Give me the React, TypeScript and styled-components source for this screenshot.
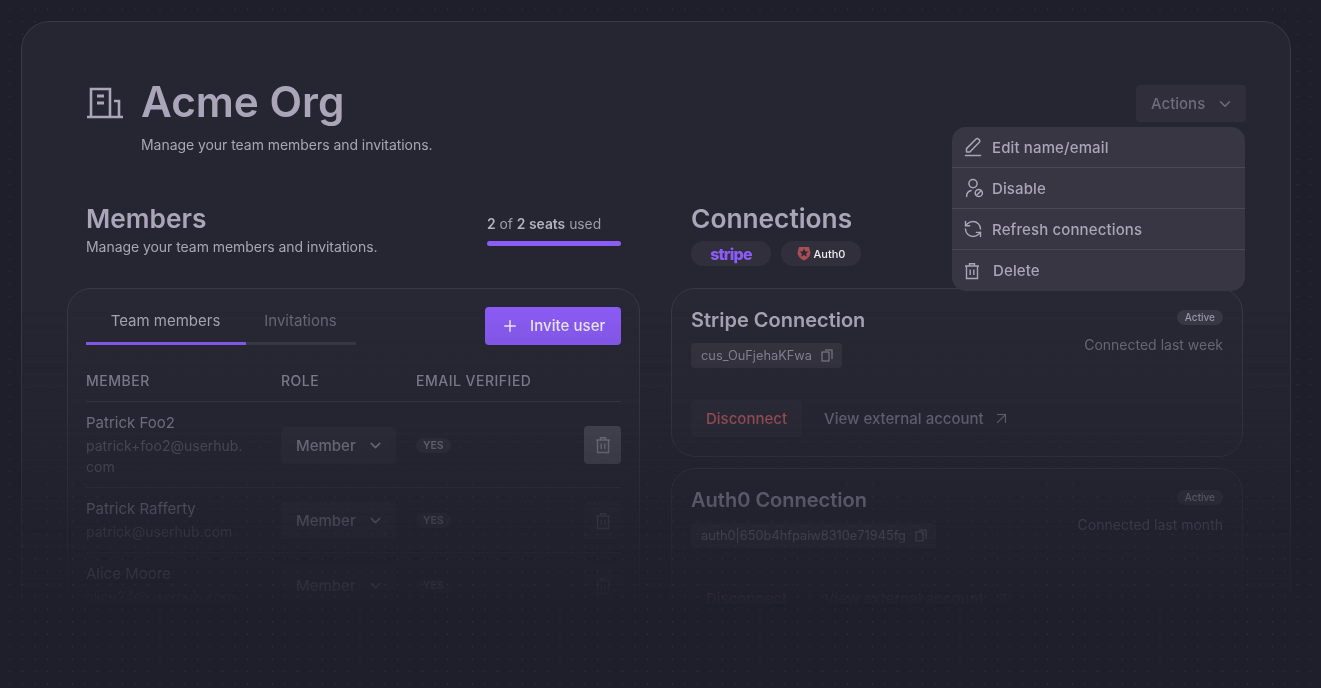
import React from 'react';
import styled, { createGlobalStyle } from 'styled-components';
import { ArrowUpRight, ChevronDown, Plus, RefreshCcw } from 'lucide-react';

const GlobalStyle = createGlobalStyle`
  html, body {
    margin: 0;
    height: 688px;
    overflow: hidden;
    background: #1f1f2c;
    font-family: Inter, "Liberation Sans", sans-serif;
    -webkit-font-smoothing: antialiased;
  }
  * { box-sizing: border-box; }
`;

const Page = styled.div`
  height: 688px;
  padding: 21px 30px 0 21px;
  background-color: #1f1f2c;
  background-image: radial-gradient(circle, #383844 0.5px, transparent 0.9px);
  background-size: 12.5px 12.5px;
  background-position: 3.75px 3px;
`;

const Window = styled.div`
  height: 586px;
  padding: 0 47px 0 45px;
  overflow: hidden;
  background: #262632;
  border: 1px solid #3a3a46;
  border-bottom: 0;
  border-radius: 28px 28px 0 0;
  -webkit-mask-image: linear-gradient(to bottom, #000 0, #000 285px, rgba(0, 0, 0, 0.72) 400px, rgba(0, 0, 0, 0.3) 510px, rgba(0, 0, 0, 0.1) 572px, rgba(0, 0, 0, 0) 586px);
  mask-image: linear-gradient(to bottom, #000 0, #000 285px, rgba(0, 0, 0, 0.72) 400px, rgba(0, 0, 0, 0.3) 510px, rgba(0, 0, 0, 0.1) 572px, rgba(0, 0, 0, 0) 586px);
`;

const Header = styled.header`
  display: flex;
  justify-content: space-between;
  align-items: flex-start;
  padding: 55px 0 0 19px;
  margin-right: -3px;
`;

const TitleBlock = styled.div`
  display: grid;
  grid-template-columns: 55px auto;
  row-gap: 8px;
  align-items: center;
`;

const Title = styled.h1`
  margin: 0;
  font-size: 42.3px;
  line-height: 50px;
  font-weight: 600;
  color: #aba5b9;
`;

const HeaderSub = styled.p`
  grid-column: 2;
  margin: 0;
  font-size: 14px;
  line-height: 20px;
  letter-spacing: -0.05px;
  color: #a9a5b4;
`;

const ActionsWrap = styled.div`
  position: relative;
  margin-top: 8px;
`;

const ActionsButton = styled.button`
  display: flex;
  align-items: center;
  justify-content: space-between;
  width: 110px;
  height: 37px;
  padding: 0 12px 0 15px;
  border: 0;
  border-radius: 4px;
  background: #2f2e3a;
  color: #6f6b7d;
  font: 500 15px/20px Inter, sans-serif;
`;

const Menu = styled.div`
  position: absolute;
  top: 42px;
  right: 1px;
  z-index: 2;
  width: 293px;
  border-radius: 14px;
  background: #383643;
  overflow: hidden;
`;

const MenuItem = styled.div<{ $gap?: number }>`
  display: flex;
  align-items: center;
  gap: ${(p) => p.$gap ?? 9}px;
  height: 41px;
  padding: 0 0 0 11px;
  border-bottom: 1px solid #4a4855;
  color: #aaa5b8;
  font-size: 15px;
  font-weight: 500;
  letter-spacing: 0.13px;
  &:last-child {
    border-bottom: 0;
  }
`;

const Columns = styled.div`
  display: grid;
  grid-template-columns: 573px 572px;
  column-gap: 31px;
  margin-top: 48px;
`;

const SectionHead = styled.div<{ $inset: number }>`
  display: flex;
  justify-content: space-between;
  height: 85px;
  padding: 0 19px 0 ${(p) => p.$inset}px;
`;

const SectionTitle = styled.h2`
  margin: 0;
  font-size: 26.3px;
  line-height: 32px;
  font-weight: 600;
  color: #aaa5b8;
`;

const SectionSub = styled.p`
  margin: 2px 0 0;
  font-size: 14px;
  line-height: 20px;
  letter-spacing: -0.05px;
  color: #a9a5b4;
`;

const Seats = styled.div`
  width: 134px;
  padding-top: 11px;
  font-size: 13.85px;
  line-height: 20px;
  color: #a09cab;
  b {
    font-weight: 600;
    color: #b4b0bf;
  }
`;

const SeatBar = styled.div`
  height: 5px;
  margin-top: 7px;
  border-radius: 3px;
  background: #8b5cf6;
`;

const Card = styled.section`
  padding: 18px 18px 0;
  background: rgba(255, 255, 255, 0.012);
  border: 1px solid #393845;
  border-radius: 24px;
`;

const CardTop = styled.div`
  display: flex;
  justify-content: space-between;
  align-items: flex-end;
`;

const Tabs = styled.div`
  display: grid;
  grid-template-columns: 160px 110px;
`;

const Tab = styled.div<{ $active?: boolean }>`
  height: 35px;
  padding: 1px 1px 0 0;
  text-align: center;
  font-size: 15px;
  line-height: 20px;
  color: ${(p) => (p.$active ? '#a9a5b5' : '#6a6777')};
  border-bottom: 3px solid ${(p) => (p.$active ? '#8b5cf6' : '#393845')};
`;

const InviteButton = styled.button`
  display: flex;
  align-items: center;
  gap: 11px;
  width: 136px;
  height: 38px;
  padding: 0 0 0 16px;
  border: 0;
  border-radius: 4px;
  background: #8b5cf6;
  color: #f1ecfb;
  font: 500 15px/20px Inter, sans-serif;
  letter-spacing: 0.06px;
`;

const TableRow = styled.div<{ $head?: boolean }>`
  display: grid;
  grid-template-columns: 195px 135px 1fr 37px;
  align-items: center;
  padding: ${(p) => (p.$head ? '26px 0 10px' : '11px 0 10px')};
  border-bottom: 1px solid #383743;
`;

const HeadCell = styled.div`
  font-size: 14px;
  line-height: 20px;
  font-weight: 500;
  letter-spacing: 0.5px;
  color: #8f8b9c;
`;

const Name = styled.div`
  font-size: 15px;
  line-height: 20px;
  color: #8f8b9c;
`;

const Email = styled.div`
  width: 160px;
  margin-top: 2px;
  font-size: 14px;
  line-height: 21px;
  color: #5f5c6b;
  overflow-wrap: anywhere;
`;

const RoleSelect = styled.div`
  display: flex;
  align-items: center;
  justify-content: space-between;
  width: 115px;
  height: 37px;
  padding: 0 12px 0 15px;
  border-radius: 4px;
  background: #2f2e3a;
  color: #928e9f;
  font-size: 15px;
  font-weight: 500;
`;

const YesCell = styled.div`
  display: flex;
  align-items: center;
`;

const YesPill = styled.span`
  padding: 0 7px;
  border-radius: 8px;
  background: #33323e;
  color: #85818f;
  font-size: 10.5px;
  line-height: 15px;
  font-weight: 600;
`;

const TrashButton = styled.div<{ $active?: boolean }>`
  display: flex;
  align-items: center;
  justify-content: center;
  width: 37px;
  height: 38px;
  border-radius: 4px;
  background: ${(p) => (p.$active ? '#4e4d59' : '#2c2b37')};
  color: ${(p) => (p.$active ? '#8f8b9c' : '#55525f')};
`;

const LogoRow = styled.div`
  display: flex;
  gap: 10px;
  margin-top: 6px;
`;

const LogoPill = styled.div`
  display: flex;
  align-items: center;
  justify-content: center;
  gap: 3px;
  width: 80px;
  height: 25px;
  border-radius: 12px;
  background: #302f3b;
`;

const StripeMark = styled.span`
  color: #8b5cf6;
  font-size: 16px;
  font-weight: 800;
  letter-spacing: -0.8px;
`;

const AuthMark = styled.span`
  color: #eeedf2;
  font-size: 11px;
  font-weight: 500;
`;

const ConnectionStack = styled.div`
  display: flex;
  flex-direction: column;
  gap: 11px;
`;

const ConnectionCard = styled.section`
  display: flex;
  justify-content: space-between;
  height: 169px;
  padding: 19px 19px 0;
  background: rgba(255, 255, 255, 0.012);
  border: 1px solid #393845;
  border-radius: 24px;
`;

const ConnectionTitle = styled.h3`
  margin: 0;
  font-size: 20px;
  line-height: 24px;
  font-weight: 600;
  color: #aaa5b8;
`;

const IdChip = styled.div`
  display: inline-flex;
  align-items: center;
  gap: 9px;
  height: 25px;
  margin-top: 11px;
  padding: 0 9px 0 10px;
  border-radius: 4px;
  background: #35343f;
  color: #8f8b9c;
  font-size: 12.8px;
`;

const ConnectionActions = styled.div`
  display: flex;
  align-items: center;
  gap: 22px;
  margin-top: 32px;
`;

const DisconnectButton = styled.div`
  display: flex;
  align-items: center;
  height: 37px;
  padding: 0 15px;
  border-radius: 4px;
  background: #2d2c38;
  color: #bb5b5f;
  font-size: 15px;
  font-weight: 500;
`;

const ExternalLink = styled.div`
  display: flex;
  align-items: center;
  gap: 8px;
  color: #777485;
  font-size: 15px;
  font-weight: 500;
`;

const ConnectionMeta = styled.div`
  display: flex;
  flex-direction: column;
  align-items: flex-end;
  padding-top: 2px;
`;

const ActivePill = styled.span`
  padding: 0 8px;
  border-radius: 8px;
  background: #393845;
  color: #9d99a8;
  font-size: 10px;
  line-height: 15px;
  font-weight: 500;
`;

const Connected = styled.div`
  margin-top: 10px;
  color: #6f6c7b;
  font-size: 14px;
  line-height: 20px;
`;

const line = {
  fill: 'none',
  stroke: 'currentColor',
  strokeLinecap: 'round' as const,
  strokeLinejoin: 'round' as const,
};

const BuildingIcon = () => (
  <svg width="38" height="33" viewBox="0 0 38 33" style={{ color: '#aba5b9', marginLeft: 1 }}>
    <g {...line} strokeWidth="2.6" strokeLinecap="butt" strokeLinejoin="miter">
      <path d="M0 31h36" />
      <path d="M4 31V3h19v28" />
      <path d="M10 10h7M10 17h7" strokeWidth="3.2" />
      <path d="M27 15h5v16" />
    </g>
  </svg>
);

const PencilIcon = () => (
  <svg width="20" height="20" viewBox="0 0 20 20" style={{ marginLeft: 1 }}>
    <g {...line} strokeWidth="1.5">
      <path d="M1.500 18.500h15" />
      <path d="M2.500 15v-3.400L12.100 2a1.600 1.600 0 0 1 2.300 0l.9.9a1.600 1.600 0 0 1 0 2.300L5.800 15z" />
    </g>
  </svg>
);

const UserOffIcon = () => (
  <svg width="20" height="20" viewBox="0 0 20 20" style={{ marginLeft: 1 }}>
    <g {...line} strokeWidth="1.5">
      <circle cx="9" cy="5.600" r="4.100" />
      <path d="M2.600 18.600c0-3.200 2-5.400 4.600-6" />
      <circle cx="14.800" cy="15" r="3.600" />
      <path d="M12.600 17.200l4.400-4.400" />
    </g>
  </svg>
);

const TrashIcon = ({ size = 18 }: { size?: number }) => (
  <svg width={size} height={size} viewBox="0 0 18 18">
    <g {...line} strokeWidth="1.4" strokeLinecap="butt" strokeLinejoin="miter">
      <path d="M2 4h14" />
      <path d="M6.500 4V1.700h5V4" />
      <path d="M3.500 4v12.500h11V4" />
      <path d="M7.200 7.500v5.500M10.800 7.500v5.500" />
    </g>
  </svg>
);

const CopyIcon = () => (
  <svg width="12" height="13" viewBox="0 0 12 13">
    <g {...line} strokeWidth="1.1" strokeLinecap="butt" strokeLinejoin="miter">
      <rect x="1" y="3" width="7" height="9" />
      <path d="M4 1h7v9" />
    </g>
  </svg>
);

const ShieldIcon = () => (
  <svg width="14" height="15" viewBox="0 0 14 15">
    <path d="M2 1h10l1.400 5.400c.3 3.400-2.500 6.400-6.400 8.200C3.100 12.800.3 9.800.6 6.400z" fill="#a84f53" />
    <path d="M7 2.600l1.400 3h3.100L9 7.700l1 3.100L7 9l-3 1.800 1-3.100L2.500 5.600h3.100z" fill="#2b2a36" />
  </svg>
);

const members = [
  { name: 'Patrick Foo2', email: 'patrick+foo2@userhub.com', active: true },
  { name: 'Patrick Rafferty', email: 'patrick@userhub.com' },
  { name: 'Alice Moore', email: 'alice24@userhub.com' },
];

const connections = [
  { title: 'Stripe Connection', id: 'cus_OuFjehaKFwa', when: 'Connected last week' },
  { title: 'Auth0 Connection', id: 'auth0|650b4hfpaiw8310e71945fg', when: 'Connected last month' },
];

const App = () => {
  return (
    <Page>
      <GlobalStyle />
      <Window>
        <Header>
          <TitleBlock>
            <BuildingIcon />
            <Title>Acme Org</Title>
            <HeaderSub>Manage your team members and invitations.</HeaderSub>
          </TitleBlock>
          <ActionsWrap>
            <ActionsButton>
              Actions <ChevronDown size={18} strokeWidth={2} />
            </ActionsButton>
            <Menu>
              <MenuItem $gap={8}>
                <PencilIcon /> Edit name/email
              </MenuItem>
              <MenuItem $gap={8}>
                <UserOffIcon /> Disable
              </MenuItem>
              <MenuItem $gap={9}>
                <RefreshCcw size={20} strokeWidth={1.7} /> Refresh connections
              </MenuItem>
              <MenuItem $gap={12}>
                <TrashIcon /> Delete
              </MenuItem>
            </Menu>
          </ActionsWrap>
        </Header>

        <Columns>
          <div>
            <SectionHead $inset={19}>
              <div>
                <SectionTitle>Members</SectionTitle>
                <SectionSub>Manage your team members and invitations.</SectionSub>
              </div>
              <Seats>
                <b>2</b> of <b>2 seats</b> used
                <SeatBar />
              </Seats>
            </SectionHead>
            <Card>
              <CardTop>
                <Tabs>
                  <Tab $active>Team members</Tab>
                  <Tab>Invitations</Tab>
                </Tabs>
                <InviteButton>
                  <Plus size={18} strokeWidth={2} /> Invite user
                </InviteButton>
              </CardTop>
              <TableRow $head>
                <HeadCell>MEMBER</HeadCell>
                <HeadCell>ROLE</HeadCell>
                <HeadCell>EMAIL VERIFIED</HeadCell>
              </TableRow>
              {members.map((m) => (
                <TableRow key={m.name}>
                  <div>
                    <Name>{m.name}</Name>
                    <Email>{m.email}</Email>
                  </div>
                  <RoleSelect>
                    Member <ChevronDown size={17} strokeWidth={2} />
                  </RoleSelect>
                  <YesCell>
                    <YesPill>YES</YesPill>
                  </YesCell>
                  <TrashButton $active={m.active}>
                    <TrashIcon />
                  </TrashButton>
                </TableRow>
              ))}
            </Card>
          </div>

          <div>
            <SectionHead $inset={20}>
              <div>
                <SectionTitle>Connections</SectionTitle>
                <LogoRow>
                  <LogoPill>
                    <StripeMark>stripe</StripeMark>
                  </LogoPill>
                  <LogoPill>
                    <ShieldIcon />
                    <AuthMark>Auth0</AuthMark>
                  </LogoPill>
                </LogoRow>
              </div>
            </SectionHead>
            <ConnectionStack>
              {connections.map((c) => (
                <ConnectionCard key={c.title}>
                  <div>
                    <ConnectionTitle>{c.title}</ConnectionTitle>
                    <IdChip>
                      {c.id} <CopyIcon />
                    </IdChip>
                    <ConnectionActions>
                      <DisconnectButton>Disconnect</DisconnectButton>
                      <ExternalLink>
                        View external account <ArrowUpRight size={19} strokeWidth={1.4} />
                      </ExternalLink>
                    </ConnectionActions>
                  </div>
                  <ConnectionMeta>
                    <ActivePill>Active</ActivePill>
                    <Connected>{c.when}</Connected>
                  </ConnectionMeta>
                </ConnectionCard>
              ))}
            </ConnectionStack>
          </div>
        </Columns>
      </Window>
    </Page>
  );
};

export default App;
